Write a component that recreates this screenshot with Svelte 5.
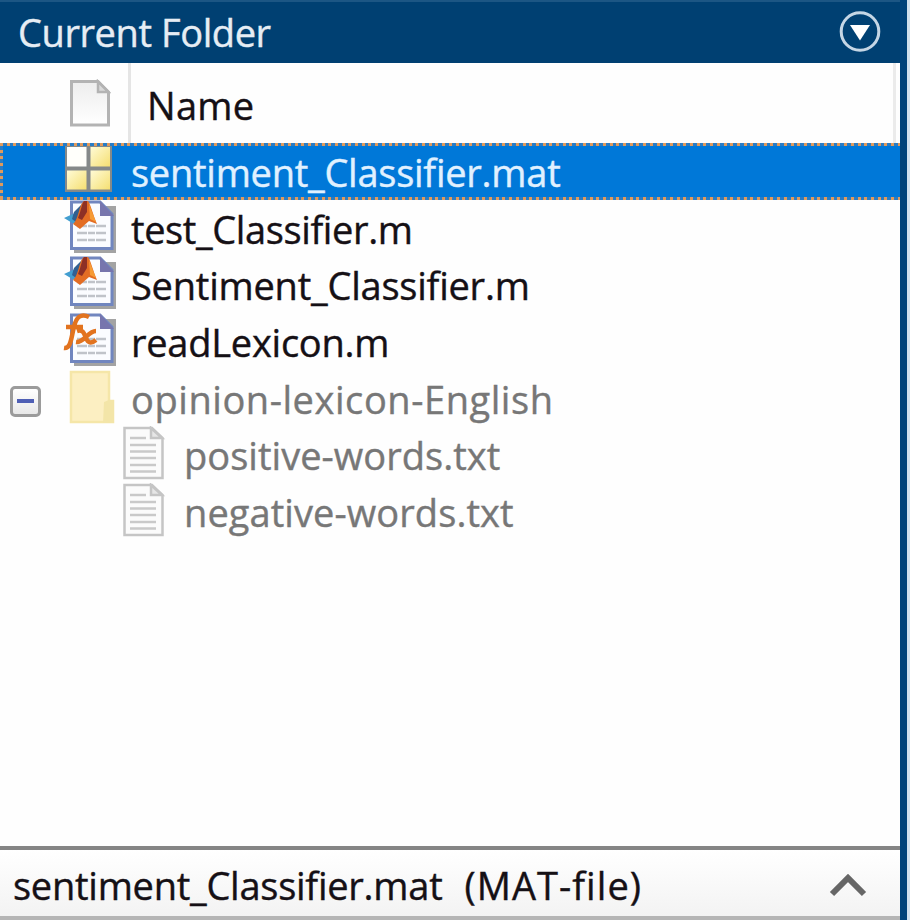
<script>
  let selected = $state(0);
  let open = $state(true);

  const files = [
    { name: "sentiment_Classifier.mat", icon: "mat", spacing: -0.25 },
    { name: "test_Classifier.m", icon: "script", spacing: -0.38 },
    { name: "Sentiment_Classifier.m", icon: "script", spacing: -0.22 },
    { name: "readLexicon.m", icon: "fx", spacing: -0.25 },
    { name: "opinion-lexicon-English", icon: "folder", spacing: 0.56 },
    { name: "positive-words.txt", icon: "text", child: true, spacing: 0.04 },
    { name: "negative-words.txt", icon: "text", child: true, spacing: 0.08 },
  ];
</script>

{#snippet mfile()}
  <path d="M12 6H54V53H12z" fill="#a3a3a3" />
  <path d="M9.500 2H38L50 14V48.500H9.500z" fill="#fbfcff" stroke="#7186bf" stroke-width="3" />
  <path d="M38 1V16H52z" fill="#7775ad" />
  <path d="M15 26H45M15 33H45M15 40H45" stroke="#c0c3c9" stroke-width="2.500" stroke-dasharray="10 1 7 1" />
{/snippet}

{#snippet fileIcon(kind)}
  <svg class="icon" width="56" height="56" viewBox="0 0 56 56">
    {#if kind === "mat"}
      <defs>
        <linearGradient id="cell" x1="0" y1="0" x2="1" y2="1">
          <stop offset="0" stop-color="#fffbd6" />
          <stop offset="1" stop-color="#f5df72" />
        </linearGradient>
      </defs>
      <path d="M3 3H50V49H3z" fill="#858989" />
      <path d="M5 4H24.500V23.500H5z" fill="#fffffb" />
      <path d="M28.500 4H48V23.500H28.500z" fill="url(#cell)" />
      <path d="M5 27.500H24.500V46.500H5z" fill="url(#cell)" />
      <path d="M28.500 27.500H48V46.500H28.500z" fill="url(#cell)" />
    {:else if kind === "script"}
      {@render mfile()}
      <path d="M2 18L13 13L22 3L19 20L12 24z" fill="#439ed0" />
      <path d="M12 12L22 2L20 18L14 22L10 19z" fill="#315f91" />
      <path d="M11 24C17 19 17 4 22 1H26C29 5 31 15 35 24L27 21L18 29z" fill="#e36d24" />
      <path d="M16 18C19 11 20 3 22 1H25L25 12L20 20z" fill="#8d3026" />
      <path d="M27 4L34 22L28 19z" fill="#f69b35" />
    {:else if kind === "fx"}
      {@render mfile()}
      <g fill="none" stroke="#e2731f" stroke-width="4.500">
        <path d="M2 35C9 36 9 25 12 14C14 4 19 0 27 4M4 14H21" />
        <path d="M15 18C21 16 22 20 24 25C26 30 29 31 34 27M34 18C26 18 22 30 14 29" />
      </g>
    {:else if kind === "folder"}
      <path d="M9 2H47V31H51V52H9z" fill="#fcefc2" stroke="#f5e6a8" stroke-width="2.500" />
      <path d="M42 32L47 30H52V53H41z" fill="#f3e5a8" />
    {:else}
      <path d="M9.500 2H37L47.500 12V52H9.500z" fill="#fbfbfb" stroke="#c5c5c5" stroke-width="2.500" />
      <path d="M36 2V12H47z" fill="#e6e6e6" stroke="#c5c5c5" stroke-width="2.500" />
      <path d="M15 12H31M15 19H41M15 25.500H41M15 32H41M15 39H41M15 45.500H41" stroke="#c9c9c9" stroke-width="2.500" />
    {/if}
  </svg>
{/snippet}

<div class="panel">
  <div class="title">
    <span>Current Folder</span>
    <svg width="44" height="44" viewBox="0 0 44 44">
      <circle cx="22" cy="21.500" r="18.800" fill="none" stroke="#c5d6e5" stroke-width="3" />
      <path d="M12 15H32L22 30.500z" fill="#fff" />
    </svg>
  </div>

  <div class="columns">
    <div class="type">
      <svg width="42" height="50" viewBox="0 0 42 50">
        <defs>
          <linearGradient id="page" x1="0" y1="0" x2="0" y2="1">
            <stop offset="0" stop-color="#ededed" />
            <stop offset="1" stop-color="#fff" />
          </linearGradient>
        </defs>
        <path d="M2.500 2.500H29L39.500 13V46H2.500z" fill="url(#page)" stroke="#b3b3b3" stroke-width="3" />
        <path d="M29 2.500V13H39.500z" fill="#d9d9d9" stroke="#b3b3b3" stroke-width="2.500" />
      </svg>
    </div>
    <div class="name">Name</div>
  </div>

  <div class="files">
    {#each files as file, i}
      {#if open || !file.child}
        <!-- svelte-ignore a11y_click_events_have_key_events, a11y_no_static_element_interactions -->
        <div class="row" class:child={file.child} class:dim={i > 3} class:selected={selected === i} onclick={() => (selected = i)}>
          <div class="gutter">
            {#if file.icon === "folder"}
              <button class="toggle" aria-label="Toggle folder" onclick={() => (open = !open)}></button>
            {/if}
          </div>
          {@render fileIcon(file.icon)}
          <span class="label" style="letter-spacing: {file.spacing}px">{file.name}</span>
        </div>
      {/if}
    {/each}
  </div>

  <div class="details">
    <span class="file">sentiment_Classifier.mat</span>
    <span class="kind">(MAT-file)</span>
    <svg width="40" height="28" viewBox="0 0 40 28">
      <path d="M4 23L20 7L36 23" fill="none" stroke="#666" stroke-width="6" />
    </svg>
  </div>
</div>

<style>
  :global(body) {
    margin: 0;
    background: #d4e0ee;
  }
  .panel {
    box-sizing: border-box;
    width: 907px;
    height: 920px;
    display: flex;
    flex-direction: column;
    overflow: hidden;
    background: #fefefe;
    border-right: 7px solid #03427a;
    font-family: "Open Sans", "Noto Sans", sans-serif;
    font-size: 38px;
    white-space: nowrap;
    color: #151015;
    -webkit-text-stroke: 0.4px;
  }
  .title {
    box-sizing: border-box;
    height: 63px;
    flex: none;
    display: flex;
    align-items: center;
    justify-content: space-between;
    padding: 0 18px 2px 18px;
    background: #004072;
    border-top: 2px solid #1c5684;
    color: #e6edf4;
    letter-spacing: -0.42px;
  }
  .columns {
    height: 80px;
    flex: none;
    display: flex;
    margin-right: 4px;
    border-right: 3px solid #ebebeb;
  }
  .type {
    box-sizing: border-box;
    width: 131px;
    padding: 16px 0 0 69px;
    border-right: 3px solid #e5e5e5;
  }
  .name {
    padding-left: 16px;
    line-height: 85px;
    letter-spacing: 0.3px;
  }
  .files {
    flex: 1;
  }
  .row {
    box-sizing: border-box;
    height: 56.7px;
    display: flex;
    align-items: flex-start;
    line-height: 59px;
  }
  .gutter {
    width: 62px;
    height: 56px;
    flex: none;
  }
  .child .gutter {
    width: 115px;
  }
  .icon {
    flex: none;
  }
  .label {
    padding-left: 13px;
  }
  .dim {
    color: #777;
  }
  .selected {
    color: #e0f1ff;
    background:
      repeating-linear-gradient(90deg, #e09a5b 0 3px, #287cc5 3px 6.700px) top / 100% 3px no-repeat,
      repeating-linear-gradient(90deg, #e09a5b 0 3px, #287cc5 3px 6.700px) bottom / 100% 3px no-repeat,
      repeating-linear-gradient(#e09a5b 0 3px, #287cc5 3px 6.700px) left / 3px 100% no-repeat,
      #0078d8;
  }
  .toggle {
    box-sizing: border-box;
    display: block;
    width: 31px;
    height: 31px;
    margin: 16px 0 0 10px;
    padding: 0;
    border: 3px solid #9b9b9b;
    border-radius: 5px;
    background:
      linear-gradient(#4f5fb5, #4f5fb5) center / 17px 4px no-repeat,
      linear-gradient(#fff, #e8e8e8);
  }
  .details {
    box-sizing: border-box;
    height: 74px;
    flex: none;
    display: flex;
    align-items: center;
    padding: 3px 32px 0 13px;
    border-top: 4px solid #858585;
    border-bottom: 4px solid #b5b5b5;
    background: linear-gradient(#fff, #f3f3f3);
  }
  .file {
    letter-spacing: -0.25px;
  }
  .kind {
    margin-left: 22px;
    letter-spacing: 1.05px;
  }
  .details svg {
    margin-left: auto;
  }
</style>
